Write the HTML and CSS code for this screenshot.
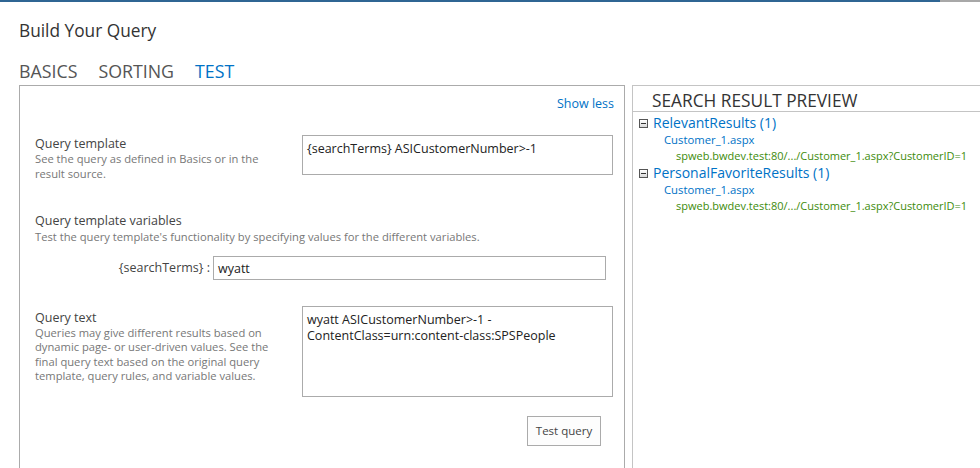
FILE: index.html
```html
<!DOCTYPE html>
<html>
<head>
<meta charset="utf-8">
<link rel="stylesheet" href="styles.css">
</head>
<body>
<div class="topbar"><div class="topbar-blue"></div><div class="topbar-gray"></div></div>
<h1 class="title">Build Your Query</h1>
<nav class="tabs">
  <span class="tab">BASICS</span>
  <span class="tab">SORTING</span>
  <span class="tab active">TEST</span>
</nav>
<div class="panels">
  <section class="left">
    <div class="showless"><a>Show less</a></div>

    <div class="row row-template">
      <div class="label">
        <div class="label-title">Query template</div>
        <div class="desc">See the query as defined in Basics or in the result source.</div>
      </div>
      <div class="box box-template">{searchTerms} ASICustomerNumber&gt;-1</div>
    </div>

    <div class="vars">
      <div class="label-title">Query template variables</div>
      <div class="desc">Test the query template's functionality by specifying values for the different variables.</div>
      <div class="var-row">
        <span class="var-label">{searchTerms} :</span>
        <div class="input">wyatt</div>
      </div>
    </div>

    <div class="row row-text">
      <div class="label">
        <div class="label-title">Query text</div>
        <div class="desc">Queries may give different results based on dynamic page- or user-driven values. See the final query text based on the original query template, query rules, and variable values.</div>
      </div>
      <div class="box box-text">wyatt ASICustomerNumber&gt;-1 -ContentClass=urn:content-class:SPSPeople</div>
    </div>

    <div class="actions"><button class="btn">Test query</button></div>
  </section>

  <section class="right">
    <div class="preview-head">SEARCH RESULT PREVIEW</div>
    <div class="results">
      <div class="group">
        <div class="group-title"><span class="toggle"></span>RelevantResults (1)</div>
        <div class="item">Customer_1.aspx</div>
        <div class="url">spweb.bwdev.test:80/.../Customer_1.aspx?CustomerID=1</div>
      </div>
      <div class="group">
        <div class="group-title"><span class="toggle"></span>PersonalFavoriteResults (1)</div>
        <div class="item">Customer_1.aspx</div>
        <div class="url">spweb.bwdev.test:80/.../Customer_1.aspx?CustomerID=1</div>
      </div>
    </div>
  </section>
</div>
</body>
</html>
```

FILE: styles.css
```css
html, body {
  margin: 0;
  padding: 0;
  background: #fff;
  overflow: hidden;
  width: 980px;
  height: 468px;
}
body {
  font-family: "Open Sans", "Noto Sans", sans-serif;
  color: #444;
}
.topbar {
  display: flex;
  height: 2px;
}
.topbar-blue { width: 940px; background: #2f6593; }
.topbar-gray { flex: 1; background: #a8a8a8; }

.title {
  margin: 18px 0 0 19px;
  font-size: 17.3px;
  font-weight: 400;
  color: #333;
  line-height: 22px;
}
.tabs {
  display: flex;
  gap: 21px;
  margin: 16px 0 0 19px;
  height: 26px;
}
.tab {
  font-size: 17.8px;
  line-height: 26px;
  color: #555;
}
.tab.active { color: #0072c6; }

.panels {
  display: flex;
  gap: 7px;
  margin: 1px 0 0 19px;
}
.left {
  width: 604px;
  height: 400px;
  border: 1px solid #ababab;
  padding: 0;
  box-sizing: content-box;
}
.right {
  flex: 1;
  height: 400px;
  border: 1px solid #c4c4c4;
  border-right: none;
}

.showless {
  text-align: right;
  padding: 9px 10px 0 0;
  font-size: 12.5px;
  line-height: 18px;
  color: #0072c6;
}
.showless a { cursor: pointer; }

.row {
  display: flex;
  padding-left: 15px;
}
.label { width: 267px; }
.label-title {
  font-size: 12.5px;
  line-height: 17px;
  color: #444;
}
.desc {
  font-size: 11.2px;
  line-height: 14.5px;
  color: #777;
}
.row-template { margin-top: 22px; }
.row-template .desc { width: 230px; }
.box {
  width: 301px;
  border: 1px solid #ababab;
  padding: 5px 4px;
  font-size: 12.5px;
  line-height: 16px;
  color: #222;
}
.box-template { height: 28px; }

.vars {
  margin-top: 31px;
  padding-left: 15px;
}
.vars .desc { margin-top: 1px; }
.var-row {
  display: flex;
  align-items: center;
  margin-top: 11px;
}
.var-label {
  width: 175px;
  text-align: right;
  padding-right: 3px;
  font-size: 12.5px;
  color: #444;
}
.input {
  width: 383px;
  height: 22px;
  border: 1px solid #ababab;
  padding: 0 4px;
  font-size: 12.5px;
  line-height: 24px;
  color: #222;
}

.row-text { margin-top: 26px; }
.row-text .label-title { margin-top: 3px; }
.row-text .desc { width: 245px; }
.box-text { height: 79px; }

.actions {
  display: flex;
  justify-content: flex-end;
  padding-right: 23px;
  margin-top: 19px;
}
.btn {
  width: 74px;
  height: 30px;
  border: 1px solid #ababab;
  background: #fdfdfd;
  font-family: "Open Sans", "Noto Sans", sans-serif;
  font-size: 11.5px;
  color: #444;
  padding: 0;
}

.preview-head {
  padding: 4px 0 0 19px;
  height: 21px;
  font-size: 17.3px;
  line-height: 21px;
  color: #333;
  border-bottom: 1px solid #c4c4c4;
  white-space: nowrap;
}
.results {
  padding: 2px 0 0 6px;
  white-space: nowrap;
}
.group-title {
  display: flex;
  align-items: center;
  font-size: 14px;
  line-height: 18px;
  color: #0072c6;
}
.toggle {
  width: 7px;
  height: 7px;
  border: 1px solid #555;
  background: linear-gradient(#fff, #d8d8d8);
  margin-right: 5px;
  position: relative;
}
.toggle::after {
  content: "";
  position: absolute;
  left: 1px;
  right: 1px;
  top: 3px;
  height: 1px;
  background: #333;
}
.item {
  padding-left: 25px;
  font-size: 11.3px;
  line-height: 16px;
  color: #0072c6;
}
.url {
  padding-left: 37px;
  font-size: 11px;
  line-height: 16px;
  color: #3d8b0b;
}
```
